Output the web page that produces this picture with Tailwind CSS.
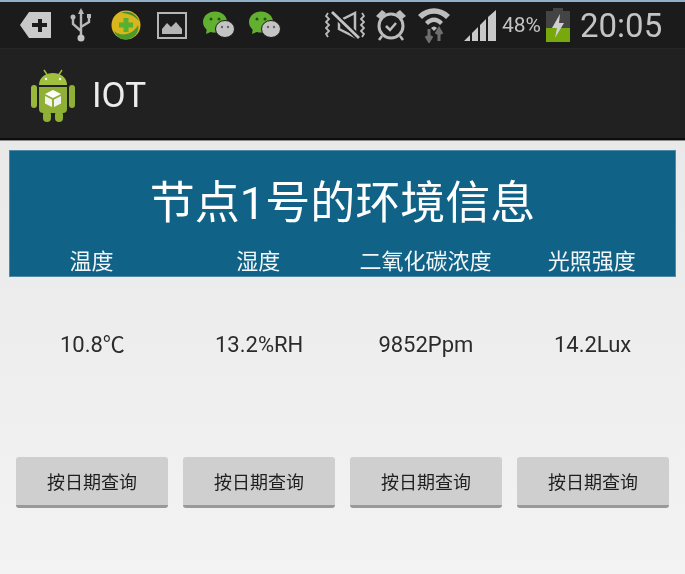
<!DOCTYPE html>
<html lang="zh">
  <head>
    <meta charset="UTF-8" />
    <title>IOT</title>
    <script src="https://cdn.jsdelivr.net/npm/@tailwindcss/browser@4"></script>
  </head>
  <body class="w-[685px] h-[574px] overflow-hidden bg-[#f2f2f2] font-['Roboto','Noto_Sans_CJK_SC',sans-serif]">
    <div class="blur-[0.5px]">
      <!-- screenshot edge -->
      <div class="h-[2px] bg-[#8fb0c8]"></div>

      <!-- status bar -->
      <div class="h-[46px] bg-[#1b1b1b] flex items-center">
        <svg class="ml-[19px] w-[33px] h-[28px]" viewBox="0 0 33 28">
          <path d="M10 1H32V27H10L1 14Z" fill="#c9c9c9" />
          <path d="M19 8h4v4h5v4h-5v5h-4v-5h-6v-4h6z" fill="#1b1b1b" />
        </svg>
        <svg class="ml-[18px] w-[22px] h-[34px]" viewBox="0 0 22 34">
          <path d="M11 2V30M11 23L3 16V10M11 19L19 14V9" fill="none" stroke="#b8b8b8" stroke-width="2.4" />
          <path d="M11 0l3 6H8z" fill="#b8b8b8" />
          <circle cx="11" cy="30" r="3.5" fill="#c4c4c4" />
          <circle cx="3" cy="9" r="2.5" fill="#b8b8b8" />
          <rect x="17" y="6" width="4" height="4" fill="#b8b8b8" />
        </svg>
        <svg class="ml-[19px] w-[30px] h-[30px]" viewBox="0 0 30 30">
          <circle cx="15" cy="15" r="14.5" fill="#d9b51e" />
          <path d="M3 21C10 27 22 25 27 15C29 22 23 29 15 29.500C9 29.500 5 26 3 21Z" fill="#4d9a2c" />
          <path d="M10 3C16 0 25 3 28 11C23 5 16 3 10 3Z" fill="#3f8f2f" />
          <path d="M12.500 8h5v4.500H22v5h-4.500V22h-5v-4.500H8v-5h4.500z" fill="#58b031" />
        </svg>
        <svg class="ml-[16px] w-[30px] h-[27px]" viewBox="0 0 30 27">
          <rect x="1" y="1" width="28" height="25" fill="none" stroke="#b5b5b5" stroke-width="2" />
          <path d="M5 22V17L10 11L14 15L19 10L25 17V22Z" fill="#b5b5b5" />
        </svg>
        <svg class="ml-[15px] w-[33px] h-[28px]" viewBox="0 0 33 28">
          <ellipse cx="13" cy="11" rx="12" ry="10.500" fill="#62b02f" />
          <path d="M5 17L4 23L11 20Z" fill="#62b02f" />
          <circle cx="9" cy="8" r="1.500" fill="#245012" />
          <circle cx="17" cy="8" r="1.500" fill="#245012" />
          <ellipse cx="23" cy="18" rx="9.500" ry="8.500" fill="#c4c4c4" stroke="#1b1b1b" />
          <circle cx="20" cy="16" r="1.200" fill="#666" />
          <circle cx="26" cy="16" r="1.200" fill="#666" />
        </svg>
        <svg class="ml-[13px] w-[33px] h-[28px]" viewBox="0 0 33 28">
          <ellipse cx="13" cy="11" rx="12" ry="10.500" fill="#62b02f" />
          <path d="M5 17L4 23L11 20Z" fill="#62b02f" />
          <circle cx="9" cy="8" r="1.500" fill="#245012" />
          <circle cx="17" cy="8" r="1.500" fill="#245012" />
          <ellipse cx="23" cy="18" rx="9.500" ry="8.500" fill="#c4c4c4" stroke="#1b1b1b" />
          <circle cx="20" cy="16" r="1.200" fill="#666" />
          <circle cx="26" cy="16" r="1.200" fill="#666" />
        </svg>
        <!-- muted/vibrate: speaker pointing left with a slash, wavy sides -->
        <svg class="ml-[44px] w-[40px] h-[30px]" viewBox="0 0 40 30">
          <path d="M14 11V19L30 27V3Z" fill="none" stroke="#bdbdbd" stroke-width="2.500" />
          <path d="M7 2L34 28" stroke="#1b1b1b" stroke-width="6" />
          <path d="M7 2L34 28" stroke="#c4c4c4" stroke-width="2.800" />
          <path d="M3 3L1 6L4 9L1 12L4 15L1 18L4 21L1 24L3 27M37 3L39 6L36 9L39 12L36 15L39 18L36 21L39 24L37 27" fill="none" stroke="#bdbdbd" stroke-width="1.800" />
        </svg>
        <svg class="ml-[10px] w-[32px] h-[34px]" viewBox="0 0 32 34">
          <circle cx="16" cy="18" r="12" fill="none" stroke="#bdbdbd" stroke-width="3" />
          <path d="M11 18L15 22L21 15" fill="none" stroke="#bdbdbd" stroke-width="2.500" />
          <path d="M1 8L7 2L11 5L5 11ZM31 8L25 2L21 5L27 11Z" fill="#bdbdbd" />
          <path d="M7 28L4 32M25 28L28 32" stroke="#bdbdbd" stroke-width="2.500" />
        </svg>
        <svg class="ml-[10px] w-[34px] h-[36px]" viewBox="0 0 34 36">
          <path d="M1 8C10 -1 24 -1 33 8L29 12C22 5 12 5 5 12Z" fill="#bdbdbd" />
          <path d="M8 15C13 9 21 9 26 15L23 18C19 14 15 14 11 18Z" fill="#bdbdbd" />
          <path d="M14 21C16 19 18 19 20 21L17 24Z" fill="#bdbdbd" />
          <path d="M12 22V33M9 29L12 34L15 29" fill="none" stroke="#6e6e6e" stroke-width="3" />
          <path d="M22 34V23M19 27L22 22L25 27" fill="none" stroke="#6e6e6e" stroke-width="3" />
        </svg>
        <svg class="ml-[13px] w-[33px] h-[33px]" viewBox="0 0 33 33">
          <path d="M0 32L6 26V32ZM8 24L14 18V32H8ZM16 16L22 10V32H16ZM24 8L32 1V32H24Z" fill="#c9c9c9" />
        </svg>
        <span class="ml-[5px] text-[21px] text-[#c4c4c4] leading-none">48%</span>
        <svg class="ml-[5px] w-[24px] h-[34px]" viewBox="0 0 24 34">
          <rect x="7" y="0" width="10" height="4" fill="#444" />
          <rect x="0" y="3" width="24" height="31" fill="#444" />
          <rect x="0" y="20" width="24" height="14" fill="#77a80c" />
          <path d="M14 6L6 20H11L9 30L18 15H13Z" fill="#d0d0d0" />
        </svg>
        <span class="ml-[10px] text-[33px] text-[#c4c4c4] leading-none">20:05</span>
      </div>

      <!-- action bar -->
      <div class="h-[90px] bg-[#212121] border-t border-[#262626] flex items-center">
        <svg class="ml-[30px] mt-[4px] w-[46px] h-[54px]" viewBox="0 0 46 54">
          <path d="M14 1L18 7M32 1L28 7" stroke="#9dbb3c" stroke-width="1.500" />
          <path d="M9 16C9 8 16 4 23 4C30 4 37 8 37 16Z" fill="#a0c03e" />
          <circle cx="16" cy="10" r="1.200" fill="#fff" />
          <circle cx="30" cy="10" r="1.200" fill="#fff" />
          <path d="M9 18H37V40C37 43 35 44 33 44H13C11 44 9 43 9 40Z" fill="#8fb035" />
          <rect x="1" y="16" width="6" height="23" rx="3" fill="#9ab83a" />
          <rect x="39" y="16" width="6" height="23" rx="3" fill="#8fb035" />
          <rect x="13" y="42" width="8" height="11" rx="4" fill="#8fb035" />
          <rect x="25" y="42" width="8" height="11" rx="4" fill="#8fb035" />
          <path d="M23 21L31 25L23 29L15 25Z" fill="#fff" />
          <path d="M15 27L22 30.500V38L15 34.500ZM31 27L24 30.500V38L31 34.500Z" fill="#f2f2f2" />
        </svg>
        <span class="ml-[16px] mt-[4px] text-[35px] text-[#ececec] leading-none">IOT</span>
      </div>
      <div class="h-[3px] bg-[#0d0d0d] border-b border-[#8a8a8a]"></div>

      <!-- content -->
      <div class="h-[433px] px-[9px] pt-[9px] bg-gradient-to-b from-[#e9e9e9] to-[#f3f3f3]">
        <div class="h-[127px] bg-[#106286] border border-[#4d8aa5] flex flex-col text-white">
          <h1 class="mt-[26px] h-[53px] text-[45px] leading-[53px] text-center font-normal">节点1号的环境信息</h1>
          <div class="mt-[18px] grid grid-cols-4 text-center text-[22px] leading-[28px] text-[#f2f6f8]">
            <div class="pr-[3px]">温度</div>
            <div class="pr-[2px]">湿度</div>
            <div>二氧化碳浓度</div>
            <div>光照强度</div>
          </div>
        </div>

        <div class="mt-[53px] grid grid-cols-4 text-center text-[22px] leading-[30px] text-[#2b2b2b]">
          <div>10.8℃</div>
          <div>13.2%RH</div>
          <div>9852Ppm</div>
          <div>14.2Lux</div>
        </div>

        <div class="mt-[97px] -mx-[1px] pl-[8px] flex gap-[15px]">
          <button class="w-[152px] h-[51px] pt-[2px] bg-[#cfcfcf] border-b-[3px] border-[#999999] rounded-[3px] text-[18px] text-[#1f1f1f]">按日期查询</button>
          <button class="w-[152px] h-[51px] pt-[2px] bg-[#cfcfcf] border-b-[3px] border-[#999999] rounded-[3px] text-[18px] text-[#1f1f1f]">按日期查询</button>
          <button class="w-[152px] h-[51px] pt-[2px] bg-[#cfcfcf] border-b-[3px] border-[#999999] rounded-[3px] text-[18px] text-[#1f1f1f]">按日期查询</button>
          <button class="w-[152px] h-[51px] pt-[2px] bg-[#cfcfcf] border-b-[3px] border-[#999999] rounded-[3px] text-[18px] text-[#1f1f1f]">按日期查询</button>
        </div>
      </div>
    </div>
  </body>
</html>
